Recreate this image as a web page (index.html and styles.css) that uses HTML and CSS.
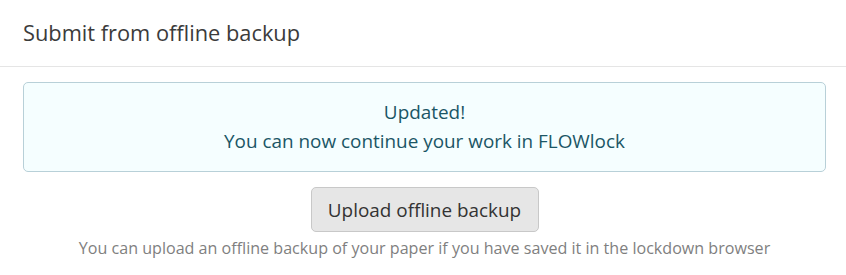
FILE: index.html
```html
<!DOCTYPE html>
<html>
<head>
<meta charset="utf-8">
<link rel="stylesheet" href="styles.css">
</head>
<body>
<div class="modal">
  <div class="modal-header">Submit from offline backup</div>
  <div class="modal-body">
    <div class="alert">
      <div>Updated!</div>
      <div>You can now continue your work in FLOWlock</div>
    </div>
    <div class="actions">
      <button class="btn">Upload offline backup</button>
      <p class="help">You can upload an offline backup of your paper if you have saved it in the lockdown browser</p>
    </div>
  </div>
</div>
</body>
</html>
```
FILE: styles.css
```css
html, body {
  margin: 0;
  padding: 0;
  background: #ffffff;
}
body {
  font-family: "Open Sans", "Noto Sans", sans-serif;
  width: 846px;
  height: 275px;
  overflow: hidden;
}
.modal {
  background: #fff;
}
.modal-header {
  height: 67px;
  box-sizing: border-box;
  padding: 18px 23px 0;
  font-size: 21.8px;
  line-height: 30px;
  color: #3b3b3b;
  border-bottom: 1px solid #e5e5e5;
}
.modal-body {
  padding: 15px 20px 0 23px;
}
.alert {
  background: #f5feff;
  border: 1px solid #b8d0d8;
  border-radius: 5px;
  color: #1b5666;
  text-align: center;
  font-size: 18.9px;
  line-height: 29px;
  padding: 15px 10px 15px;
}
.actions {
  display: flex;
  flex-direction: column;
  align-items: center;
  margin-top: 15px;
}
.btn {
  font-family: inherit;
  font-size: 18.9px;
  color: #333;
  background: #e6e6e6;
  border: 1px solid #c8c8c8;
  border-radius: 5px;
  width: 228px;
  height: 45px;
  padding: 0;
  margin: 0;
}
.help {
  margin: 6px 0 0;
  font-size: 16.1px;
  line-height: 20px;
  color: #7f7f7f;
}
```
